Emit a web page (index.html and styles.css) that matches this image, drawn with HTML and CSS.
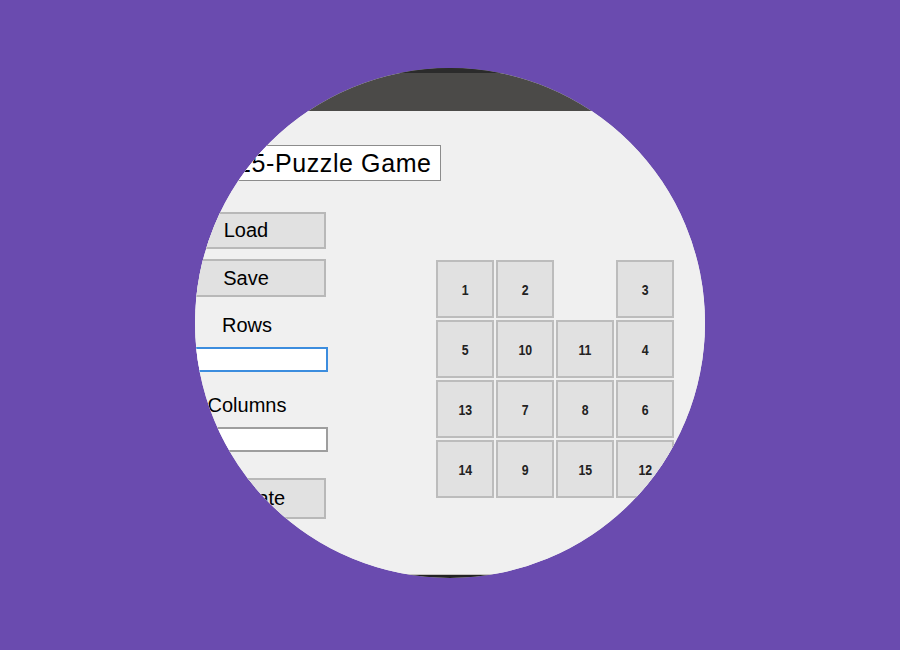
FILE: index.html
```html
<!DOCTYPE html>
<html lang="en">
<head>
<meta charset="utf-8">
<title>15-Puzzle Game</title>
<link rel="stylesheet" href="styles.css">
</head>
<body>
  <div class="lens">
    <div class="window">
      <div class="titlebar"></div>
      <div class="client">
        <div class="title-row">
          <div class="title-box">15-Puzzle Game</div>
        </div>
        <div class="main">
          <div class="controls">
            <div class="btn btn-load">Load</div>
            <div class="btn btn-save">Save</div>
            <div class="label label-rows">Rows</div>
            <div class="field field-focus"></div>
            <div class="label label-cols">Columns</div>
            <div class="field"></div>
            <div class="btn btn-update">Update</div>
          </div>
          <div class="board">
            <div class="tile"><span>1</span></div>
            <div class="tile"><span>2</span></div>
            <div class="tile empty"></div>
            <div class="tile"><span>3</span></div>
            <div class="tile"><span>5</span></div>
            <div class="tile"><span>10</span></div>
            <div class="tile"><span>11</span></div>
            <div class="tile"><span>4</span></div>
            <div class="tile"><span>13</span></div>
            <div class="tile"><span>7</span></div>
            <div class="tile"><span>8</span></div>
            <div class="tile"><span>6</span></div>
            <div class="tile"><span>14</span></div>
            <div class="tile"><span>9</span></div>
            <div class="tile"><span>15</span></div>
            <div class="tile"><span>12</span></div>
          </div>
        </div>
      </div>
      <div class="frame-line"></div>
      <div class="frame-edge"></div>
    </div>
  </div>
</body>
</html>
```
FILE: styles.css
```css
html, body {
  margin: 0;
  padding: 0;
}

body {
  width: 900px;
  height: 650px;
  overflow: hidden;
  background: #6A4BAF;
  font-family: "Liberation Sans", Arial, sans-serif;
  color: #111;
}

.lens {
  margin: 68px 0 0 195px;
  width: 510px;
  height: 510px;
  border-radius: 50%;
  overflow: hidden;
  background: #F0F0F0;
}

.window {
  margin-left: -40px;
  width: 560px;
}

.titlebar {
  height: 38px;
  border-top: 5px solid #2B2B2B;
  background: #4B4A48;
}

.client {
  height: 463px;
  box-sizing: border-box;
  padding: 34px 0 0 11px;
  background: #F0F0F0;
}

.frame-line {
  height: 1px;
  background: #C4C2BE;
}

.frame-edge {
  height: 12px;
  background: #232323;
}

.title-row {
  padding-left: 62px;
}

.title-box {
  width: 213px;
  height: 36px;
  box-sizing: border-box;
  border: 1px solid #8C8C8C;
  background: #FFFFFF;
  padding-left: 8px;
  font-size: 25px;
  line-height: 34px;
  letter-spacing: 0.6px;
  white-space: nowrap;
  overflow: hidden;
  color: #000;
}

.main {
  display: flex;
  align-items: flex-start;
}

.controls {
  width: 162px;
  margin-top: 31px;
  display: flex;
  flex-direction: column;
}

.btn {
  width: 160px;
  box-sizing: border-box;
  border: 2px solid #B8B8B8;
  background: #E1E1E1;
  font-size: 20px;
  color: #000;
  display: flex;
  align-items: center;
  justify-content: center;
}

.btn-load {
  height: 37px;
}

.btn-save {
  height: 38px;
  margin-top: 10px;
}

.btn-update {
  height: 41px;
  margin-top: 26px;
  padding-left: 14px;
}

.label {
  font-size: 20px;
  line-height: 23px;
  text-align: center;
  color: #000;
}

.label-rows {
  margin-top: 17px;
}

.label-cols {
  margin-top: 22px;
}

.field {
  width: 162px;
  height: 25px;
  box-sizing: border-box;
  margin-top: 10px;
  border: 2px solid #9E9E9E;
  background: #FFFFFF;
}

.field-focus {
  border-color: #3C8DDE;
}

.board {
  margin: 79px 0 0 108px;
  display: grid;
  grid-template-columns: repeat(4, 58px);
  grid-auto-rows: 58px;
  gap: 2px;
}

.tile {
  box-sizing: border-box;
  border: 2px solid #BCBCBC;
  background: #E1E1E1;
  display: flex;
  align-items: center;
  justify-content: center;
  font-family: "Liberation Sans", Arial, sans-serif;
  font-weight: bold;
  font-size: 15px;
  color: #222;
}

.tile span {
  display: inline-block;
  transform: scaleX(0.82);
}

.tile.empty {
  border-color: transparent;
  background: transparent;
}
```
